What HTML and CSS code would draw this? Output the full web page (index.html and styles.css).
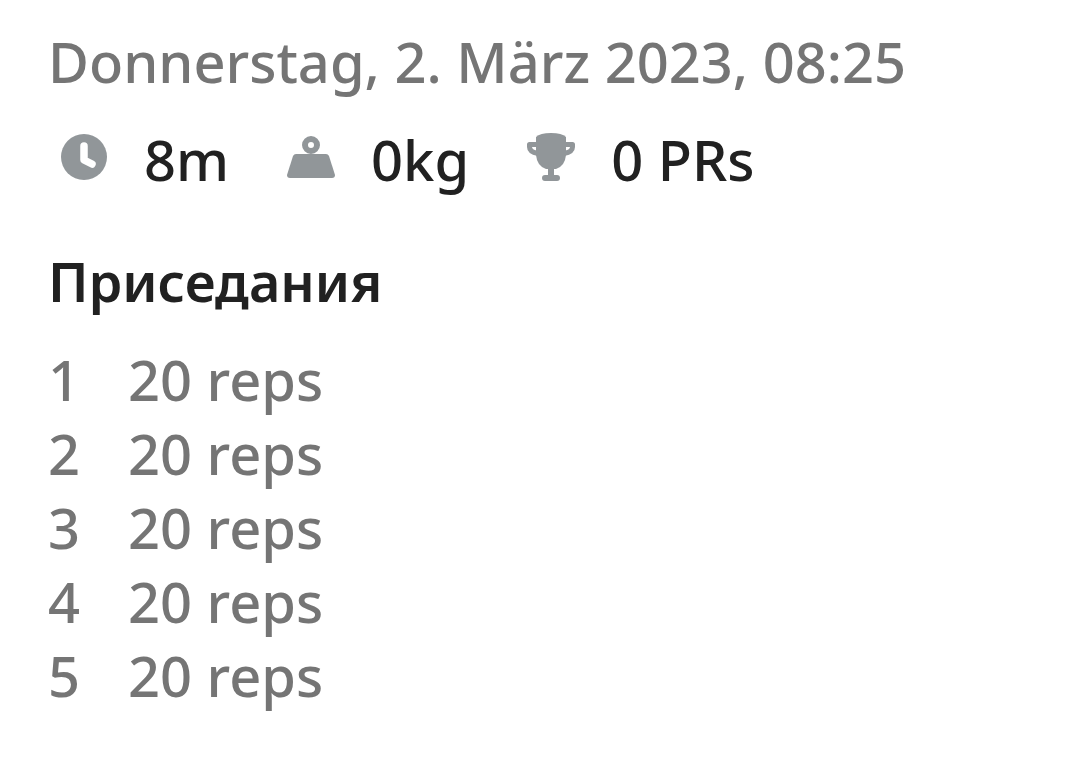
FILE: index.html
```html
<!DOCTYPE html>
<html lang="de">
<head>
<meta charset="utf-8">
<meta name="viewport" content="width=device-width, initial-scale=1">
<title>Workout</title>
<link rel="stylesheet" href="styles.css">
</head>
<body>
<main class="workout">
  <time class="date" datetime="2023-03-02T08:25">Donnerstag, 2. März 2023, 08:25</time>
  <ul class="stats">
    <li class="stat">
      <svg class="icon" viewBox="0 0 48 48" aria-hidden="true"><circle cx="24" cy="24" r="23" fill="#919699"/><path d="M24 13v14l8 4" fill="none" stroke="#fff" stroke-width="7.500" stroke-linecap="round" stroke-linejoin="round"/></svg>
      <span>8m</span>
    </li>
    <li class="stat">
      <svg class="icon" viewBox="0 0 48 48" aria-hidden="true"><circle cx="24" cy="12" r="6" fill="none" stroke="#919699" stroke-width="6"/><path d="M9 21h30q2 0 3 2l6 19q0 3-3 3H3q-3 0-3-3l6-19q1-2 3-2z" fill="#919699"/></svg>
      <span>0kg</span>
    </li>
    <li class="stat">
      <svg class="icon" viewBox="0 0 48 48" aria-hidden="true"><path d="M9 4Q13 0 24 0t15 4v18q-1 11-10 14H19Q10 33 9 22z" fill="#919699"/><path d="M11 11.500H2.500V14q0 5 8.500 6.500M37 11.500h8.500V14q0 5-8.500 6.500" fill="none" stroke="#919699" stroke-width="5" stroke-linejoin="round"/><path d="M24 34v10M18 45h12" fill="none" stroke="#919699" stroke-width="6" stroke-linecap="round"/></svg>
      <span>0 PRs</span>
    </li>
  </ul>
  <h2 class="exercise">Приседания</h2>
  <ol class="sets">
    <li class="set"><span>1</span><span>20 reps</span></li>
    <li class="set"><span>2</span><span>20 reps</span></li>
    <li class="set"><span>3</span><span>20 reps</span></li>
    <li class="set"><span>4</span><span>20 reps</span></li>
    <li class="set"><span>5</span><span>20 reps</span></li>
  </ol>
</main>
</body>
</html>
```
FILE: styles.css
```css
body {
  margin: 0;
  background: #fff;
  color: #212121;
  font-family: "Noto Sans", sans-serif;
  font-size: 56px;
  font-weight: 500;
  line-height: 74px;
}
.workout { padding: 24px 48px; }
.date { display: block; color: #757575; }
.stats {
  display: flex;
  gap: 58px;
  margin: 24px 0 0;
  padding: 0 0 0 12px;
  list-style: none;
}
.stat { display: flex; gap: 36px; }
.icon { width: 48px; height: 48px; margin-top: 11px; overflow: visible; }
.exercise {
  margin: 48px 0 24px;
  font-size: 54px;
  font-weight: 600;
}
.sets { margin: 0; padding: 0; list-style: none; color: #757575; }
.set { display: grid; grid-template-columns: 80px 1fr; }
```
